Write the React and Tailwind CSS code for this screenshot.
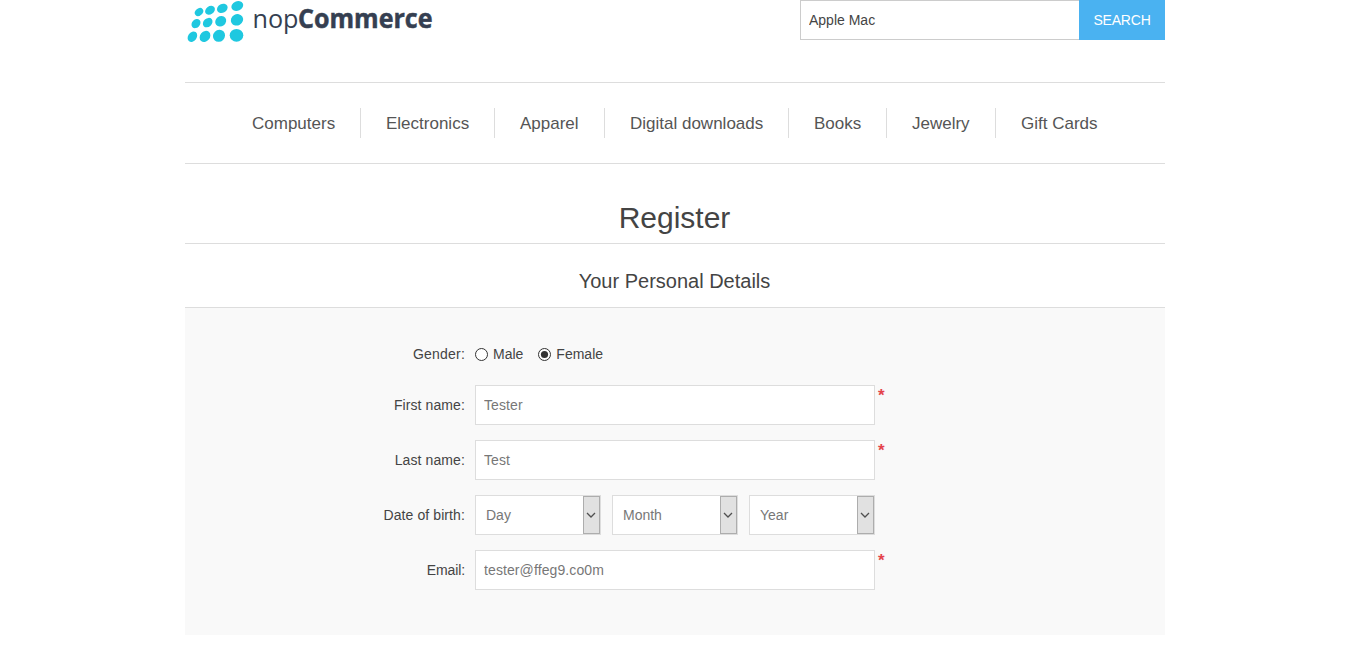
const dots = [
  [19, 12, 4.6, 3.5, -40], [30, 10.3, 5.3, 4, -35], [42.3, 8.4, 5.6, 4.3, -28], [57.3, 6, 6.1, 4.7, -25],
  [16, 23.6, 5, 4, -45], [27.7, 22.6, 5.3, 4.2, -42], [40.7, 21.3, 5.8, 5, -38], [57, 19.8, 6.3, 5.6, -30],
  [12.4, 36.7, 5.7, 4.3, -55], [25, 36.4, 6, 4.9, -50], [39, 35.8, 6.3, 5.8, -45], [56.5, 35.3, 6.8, 6.4, 0],
];

function Logo() {
  return (
    <svg width="255" height="50" viewBox="5 0 255 50" aria-label="nopCommerce" className="block">
      {dots.map(([x, y, rx, ry, a]) => (
        <ellipse key={`${x}-${y}`} cx={x} cy={y} rx={rx} ry={ry} transform={`rotate(${a} ${x} ${y})`} fill="#1fc8e0" />
      ))}
      <g fill="#353f51" fontFamily='"Open Sans", "Noto Sans", sans-serif' fontSize="26">
        <text x="72.5" y="28.3" textLength="46" lengthAdjust="spacingAndGlyphs">nop</text>
        <text x="118" y="28.3" textLength="134.5" lengthAdjust="spacingAndGlyphs" fontWeight="700" stroke="#353f51" strokeWidth="0.5">Commerce</text>
      </g>
    </svg>
  );
}

const menu = [
  ['Computers', 'w-[134px]'],
  ['Electronics', 'w-[134px]'],
  ['Apparel', 'w-[110px]'],
  ['Digital downloads', 'w-[184px]'],
  ['Books', 'w-[98px]'],
  ['Jewelry', 'w-[109px]'],
  ['Gift Cards', 'w-[127px]'],
];

function Row({ label, children, required }) {
  return (
    <div className="flex h-10">
      <div className={`w-[280px] text-right leading-10 ${label === 'Email' ? 'tracking-[-0.1px]' : 'tracking-[0.1px]'}`}>
        {label}:
      </div>
      <div className="ml-2.5 flex w-[400px] justify-between">{children}</div>
      {required && <span className="ml-[3px] mt-px text-[17px] font-bold leading-[19px] text-[#e4434b]">*</span>}
    </div>
  );
}

function Field({ value }) {
  return (
    <input
      readOnly
      value={value}
      className="h-10 w-full border border-[#ddd] bg-white px-2 text-sm tracking-[0.1px] text-[#777] outline-none"
    />
  );
}

function Select({ label }) {
  return (
    <div className="flex h-10 w-[126px] justify-between border border-[#ddd] bg-white text-[#777]">
      <span className="pl-2.5 leading-[38px]">{label}</span>
      <span className="flex w-[17px] items-center justify-center border border-[#adadad] bg-[#e1e1e1] pr-px">
        <svg width="10" height="6" viewBox="0 0 10 6" fill="none" stroke="#505050" strokeWidth="1.3">
          <path d="M1 1l4 4 4-4" />
        </svg>
      </span>
    </div>
  );
}

function Radio({ label, checked }) {
  return (
    <div className="flex items-center">
      <svg width="13" height="13" viewBox="0 0 13 13" className="mr-[5px]">
        <circle cx="6.5" cy="6.5" r="6" fill="#fff" stroke="#333" />
        {checked && <circle cx="6.5" cy="6.5" r="3.6" fill="#333" />}
      </svg>
      {label}
    </div>
  );
}

export default function App() {
  return (
    <div className="h-[654px] overflow-hidden bg-white font-['Liberation_Sans',Arial,sans-serif] text-sm text-[#444]">
      <div className="ml-[185px] w-[980px]">
        <header className="flex h-[82px] items-start justify-between">
          <Logo />
          <div className="flex h-10">
            <input
              readOnly
              value="Apple Mac"
              className="h-10 w-[279px] border border-r-0 border-[#ccc] bg-white px-2 text-sm outline-none"
            />
            <button className="h-10 w-[86px] bg-[#4ab2f1] text-sm tracking-[-0.2px] text-white">SEARCH</button>
          </div>
        </header>
        <nav className="flex h-[82px] items-center border-y border-[#ddd] pl-[42px] text-[17px] text-[#555]">
          {menu.map(([name, width], i) => (
            <a
              key={name}
              className={`${width} h-[30px] whitespace-nowrap pl-[25px] leading-[32px] ${i < menu.length - 1 ? 'border-r border-[#ddd]' : ''}`}
            >
              {name}
            </a>
          ))}
        </nav>
        <h1 className="h-20 border-b border-[#ddd] pr-px pt-[34px] text-center text-[30px] leading-10">Register</h1>
        <h2 className="h-16 border-b border-[#ddd] pr-px pt-[22px] text-center text-xl leading-[30px]">Your Personal Details</h2>
        <section className="flex h-[327px] flex-col gap-[15px] bg-[#f9f9f9] pt-[22px]">
          <div className="flex h-10 items-center pt-2">
            <div className="w-[280px] text-right tracking-[0.2px]">Gender:</div>
            <div className="ml-2.5 flex gap-[15px]">
              <Radio label="Male" />
              <Radio label="Female" checked />
            </div>
          </div>
          <Row label="First name" required><Field value="Tester" /></Row>
          <Row label="Last name" required><Field value="Test" /></Row>
          <Row label="Date of birth">
            <Select label="Day" />
            <Select label="Month" />
            <Select label="Year" />
          </Row>
          <Row label="Email" required><Field value="tester@ffeg9.co0m" /></Row>
        </section>
      </div>
    </div>
  );
}
